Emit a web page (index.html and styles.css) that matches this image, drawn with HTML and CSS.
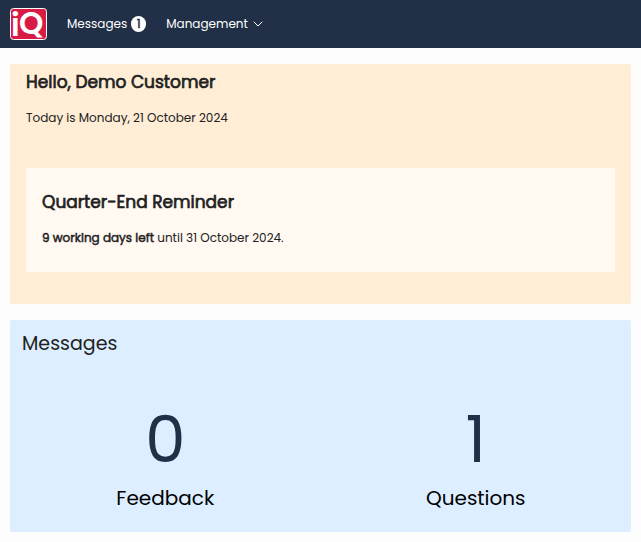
FILE: index.html
```html
<!DOCTYPE html>
<html lang="en">
<head>
<meta charset="utf-8">
<meta name="viewport" content="width=device-width, initial-scale=1">
<title>Dashboard</title>
<link rel="stylesheet" href="styles.css">
</head>
<body>
<header class="topbar">
  <a class="logo" href="#" aria-label="iQ home">
    <svg width="37" height="32" viewBox="0 0 37 32">
      <rect x="0.5" y="0.5" width="36" height="31" rx="3" fill="#d81b45" stroke="#fff"/>
      <text class="logo-text" x="1" y="28">i</text>
      <text class="logo-text" x="9" y="26">Q</text>
    </svg>
  </a>
  <nav class="menu">
    <a class="menu-item" href="#">Messages <span class="badge">1</span></a>
    <button class="menu-item" type="button">Management
      <svg class="chevron" width="10" height="6" viewBox="0 0 10 6" fill="none" stroke="currentColor" stroke-linecap="round" stroke-linejoin="round"><path d="M1 1l4 4 4-4"/></svg>
    </button>
  </nav>
</header>
<main class="page">
  <section class="welcome">
    <h1 class="title">Hello, Demo Customer</h1>
    <p class="text">Today is Monday, 21 October 2024</p>
    <div class="reminder">
      <h2 class="title">Quarter-End Reminder</h2>
      <p class="text"><strong>9 working days left</strong> until 31 October 2024.</p>
    </div>
  </section>
  <section class="messages">
    <h2 class="messages-title">Messages</h2>
    <div class="counts">
      <a class="count" href="#"><span class="number">0</span><span class="label">Feedback</span></a>
      <a class="count" href="#"><span class="number">1</span><span class="label">Questions</span></a>
    </div>
  </section>
</main>
</body>
</html>
```
FILE: styles.css
```css
* { box-sizing: border-box; }

body {
  margin: 0;
  background: #fdfdfd;
  color: #212121;
  font-family: Poppins, Inter, "Liberation Sans", sans-serif;
  font-size: 12px;
  line-height: 24px;
}

h1, h2, p { margin: 0; }
a { color: inherit; text-decoration: none; }

/* Bold drawn from the regular cut */
.title, strong, .badge {
  font-weight: 400;
  -webkit-text-stroke: 0.04em currentColor;
}

.topbar {
  display: flex;
  align-items: center;
  gap: 20px;
  height: 48px;
  padding: 0 10px;
  background: #213047;
  color: #fff;
}

.logo, .logo svg { display: block; overflow: visible; }

.logo-text {
  fill: #fff;
  font: 600 31px Poppins, "Liberation Sans", sans-serif;
}

.menu { display: flex; gap: 20px; }

.menu-item {
  display: flex;
  align-items: center;
  gap: 4px;
  padding: 0;
  border: 0;
  background: none;
  color: inherit;
  font: inherit;
}

.chevron { margin-left: 1px; }

.badge {
  width: 15px;
  border-radius: 8px;
  background: #fff;
  color: #213047;
  line-height: 16px;
  text-align: center;
}

.page {
  display: grid;
  gap: 16px;
  padding: 16px 10px 10px;
}

.welcome {
  padding: 6px 16px 32px;
  border-radius: 2px;
  background: #ffedd5;
}

.title {
  margin-bottom: 12px;
  font-size: 17px;
  line-height: 24px;
}

.reminder {
  margin-top: 38px;
  padding: 22px 16px;
  border-radius: 2px;
  background: #fff9f2;
}

.messages {
  padding: 8px 0 20px;
  border-radius: 2px;
  background: #dceeff;
}

.messages-title {
  padding: 0 12px;
  font-size: 19px;
  font-weight: 400;
  line-height: 32px;
}

.counts {
  display: grid;
  grid-template-columns: 1fr 1fr;
  padding-top: 36px;
}

.count {
  display: flex;
  flex-direction: column;
  align-items: center;
  color: #000;
}

.number {
  color: #213047;
  font-size: 64px;
  line-height: 88px;
}

.label {
  font-size: 20px;
  line-height: 28px;
}
```
